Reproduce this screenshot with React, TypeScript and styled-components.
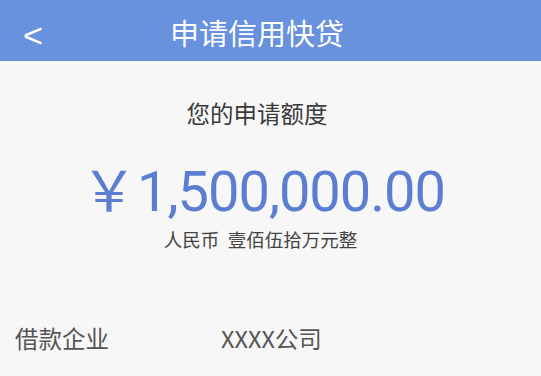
import React from "react";
import styled, { createGlobalStyle } from "styled-components";

const Global = createGlobalStyle`
  html, body { margin: 0; padding: 0; background: #f7f7f7; }
  body { font-family: "Noto Sans CJK SC", "Noto Sans", sans-serif; }
`;

const Page = styled.div`
  width: 541px;
  height: 376px;
  overflow: hidden;
  background: #f7f7f7;
  display: flex;
  flex-direction: column;
`;

const Header = styled.header`
  height: 61px;
  flex: none;
  background: #6891de;
  display: flex;
  align-items: flex-start;
  color: #fff;
`;

const Back = styled.span`
  width: 60px;
  box-sizing: border-box;
  padding-left: 23px;
  margin-top: 15px;
  font-family: "Liberation Sans", sans-serif;
  font-size: 34px;
  line-height: 40px;
  color: #fff;
`;

const Title = styled.h1`
  margin: 12px 0 0;
  flex: 1;
  text-align: center;
  padding-right: 87px;
  font-size: 29px;
  font-weight: 400;
  line-height: 40px;
`;

const Body = styled.main`
  display: flex;
  flex-direction: column;
  align-items: center;
`;

const Label = styled.div`
  margin-top: 35px;
  margin-left: -27px;
  font-size: 23.5px;
  line-height: 34px;
  color: #3a3a3a;
`;

const Amount = styled.div`
  margin-top: 25px;
  margin-left: -15px;
  font-family: "Roboto", "Noto Sans CJK SC", sans-serif;
  font-weight: 400;
  font-size: 56px;
  line-height: 64px;
  height: 64px;
  letter-spacing: -1px;
  color: #5c7ed2;
  white-space: nowrap;
`;

const Yen = styled.span`
  font-family: "Noto Sans CJK SC", sans-serif;
  letter-spacing: 0;
`;

const Words = styled.div`
  margin-top: 7px;
  margin-left: -20px;
  font-size: 18.5px;
  line-height: 26px;
  color: #444;
`;

const InfoRow = styled.div`
  margin-top: 71px;
  align-self: stretch;
  display: grid;
  grid-template-columns: 206px 1fr;
  padding-left: 15px;
  font-size: 23.5px;
  line-height: 30px;
  color: #555;
`;

export default function App() {
  return (
    <Page>
      <Global />
      <Header>
        <Back>&lt;</Back>
        <Title>申请信用快贷</Title>
      </Header>
      <Body>
        <Label>您的申请额度</Label>
        <Amount>
          <Yen>￥</Yen>1,500,000.00
        </Amount>
        <Words>人民币&nbsp;&nbsp;壹佰伍拾万元整</Words>
        <InfoRow>
          <span>借款企业</span>
          <span>XXXX公司</span>
        </InfoRow>
      </Body>
    </Page>
  );
}
